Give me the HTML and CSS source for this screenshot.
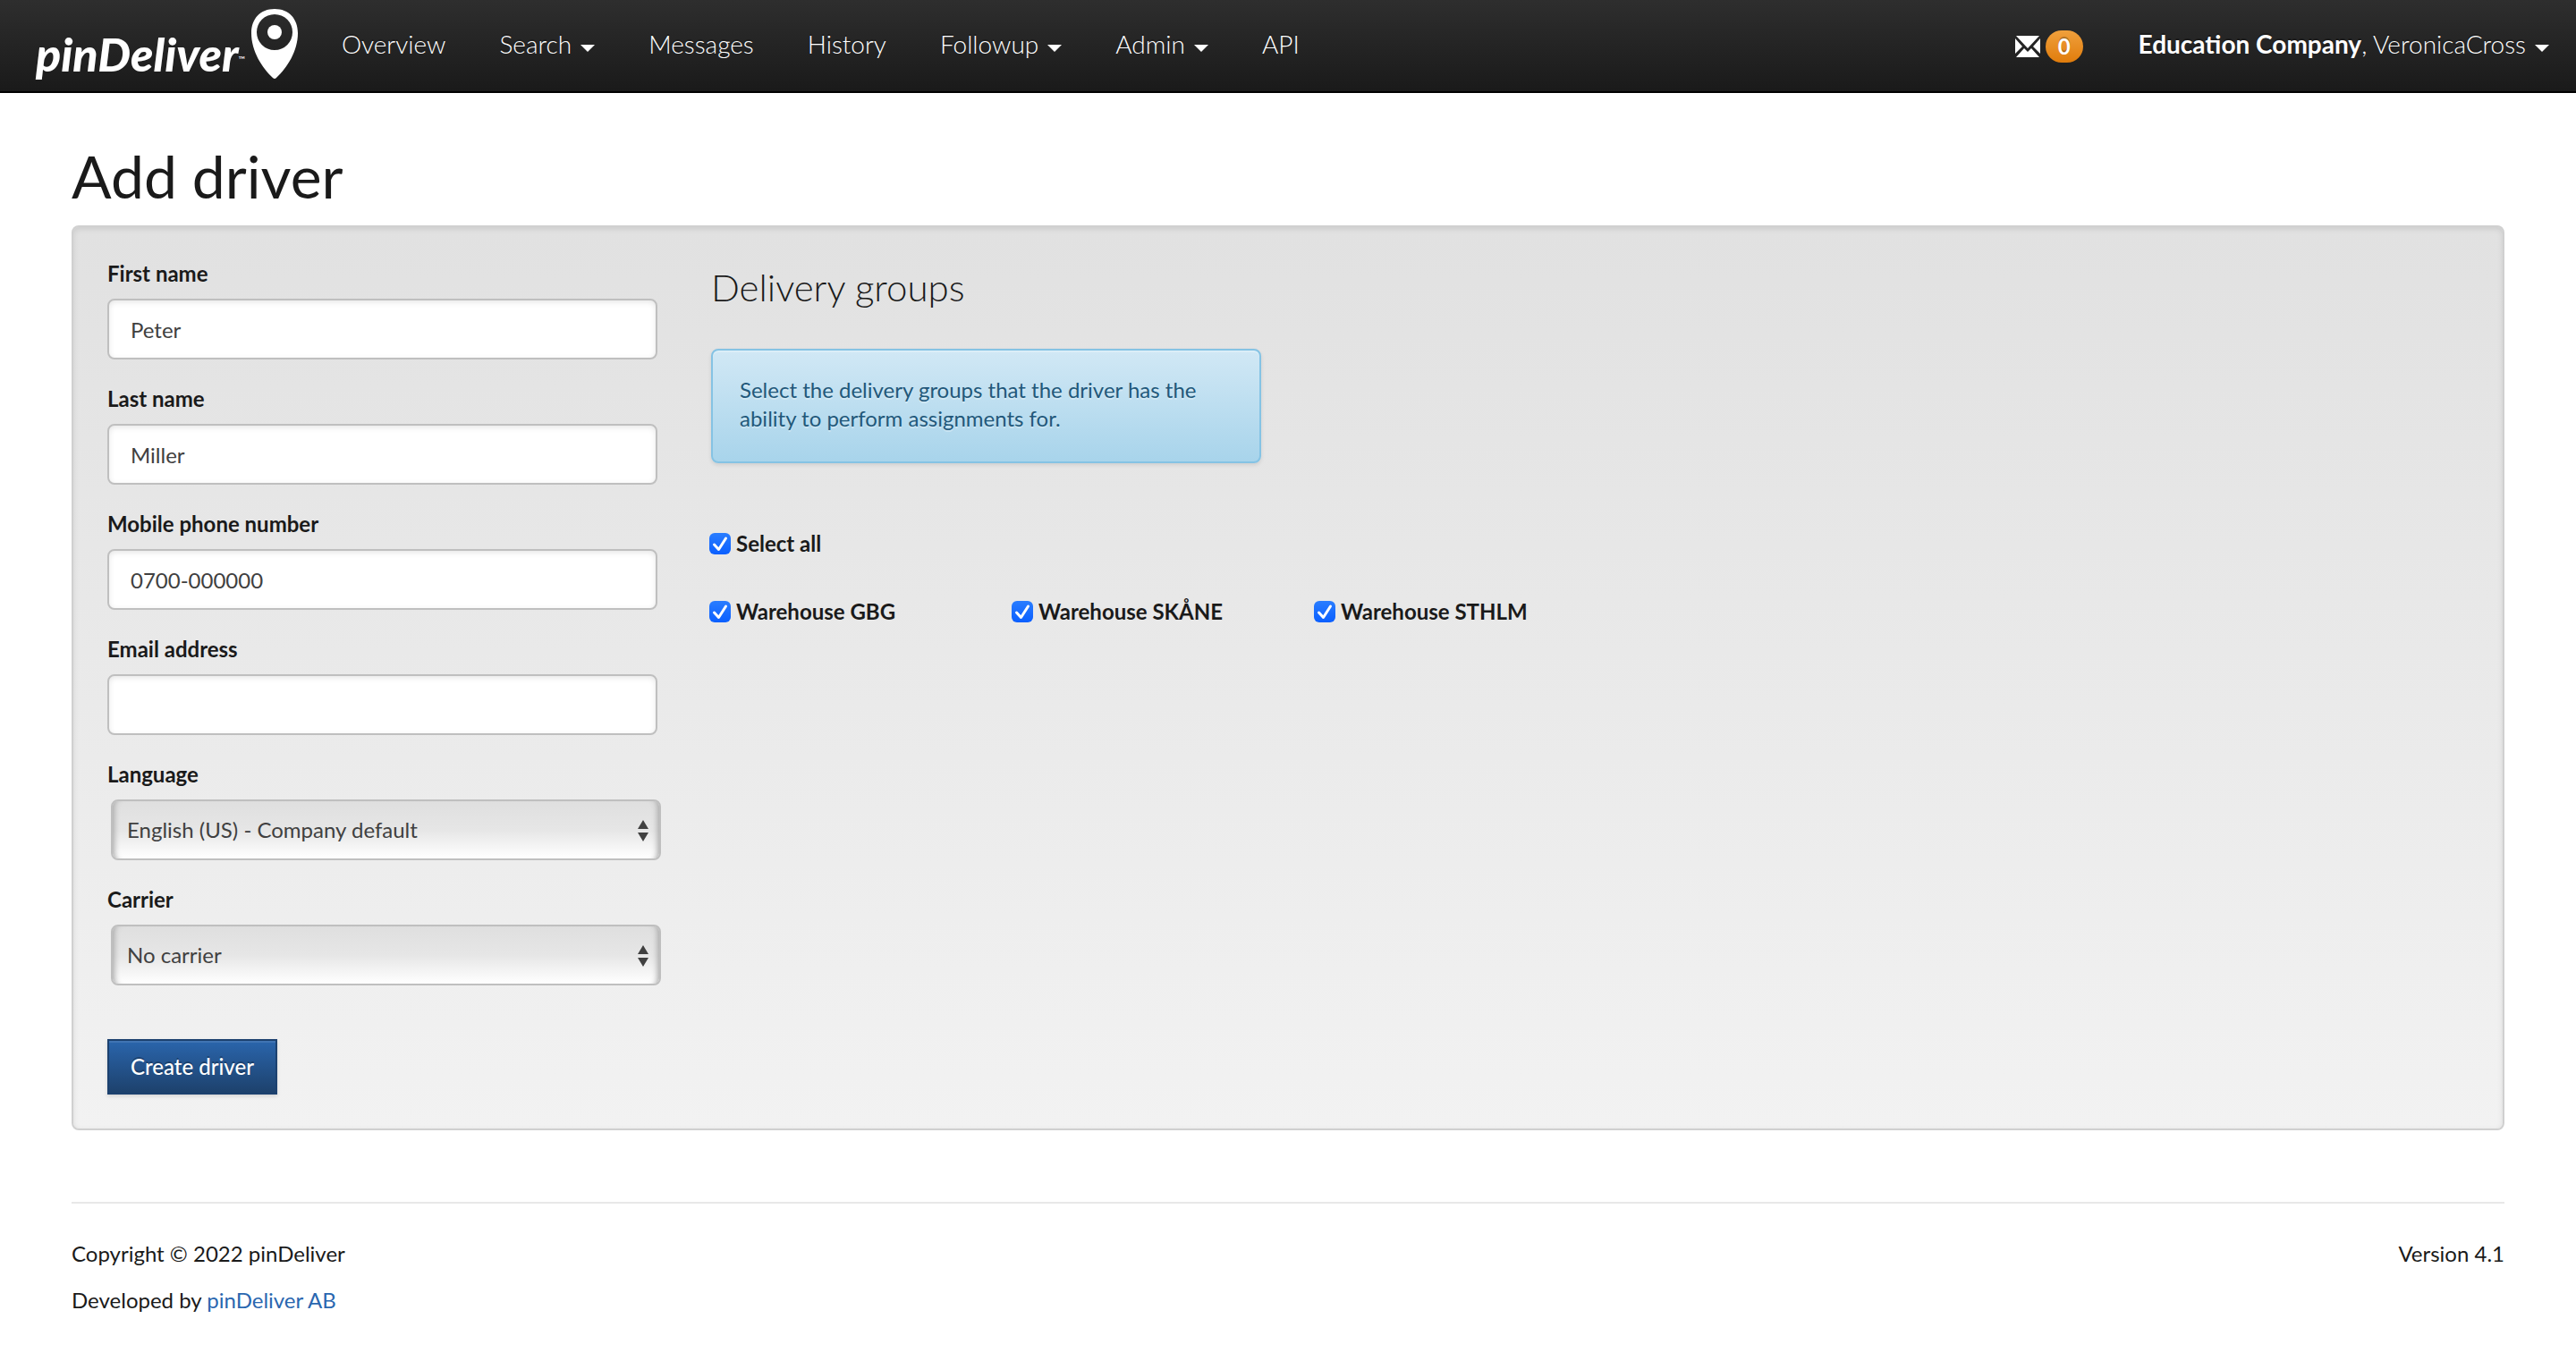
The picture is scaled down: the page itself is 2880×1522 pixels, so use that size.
FILE: index.html
```html
<!DOCTYPE html>
<html lang="en">
<head>
<meta charset="utf-8">
<title>Add driver - pinDeliver</title>
<link rel="stylesheet" href="styles.css">
</head>
<body>
<header class="navbar">
  <a class="brand" href="#" aria-label="pinDeliver">
    <span class="brand-name">pinDeliver</span><span class="brand-tm">™</span>
    <svg class="brand-pin" viewBox="0 0 52 78" aria-hidden="true">
      <path fill="#fff" fill-rule="evenodd" d="M26 0C10 0 0 11 0 27c0 20 12 39 24 50q2 2 4 0c12-11 24-30 24-50C52 11 42 0 26 0zm0 6a20 20 0 1 1 0 40 20 20 0 0 1 0-40z"/>
      <circle cx="26" cy="26" r="8" fill="#fff"/>
    </svg>
  </a>
  <nav class="menu">
    <a href="#">Overview</a>
    <a href="#">Search <span class="caret"></span></a>
    <a href="#">Messages</a>
    <a href="#">History</a>
    <a href="#">Followup <span class="caret"></span></a>
    <a href="#">Admin <span class="caret"></span></a>
    <a href="#">API</a>
  </nav>
  <div class="account">
    <a class="inbox" href="#" aria-label="Messages">
      <svg class="envelope" viewBox="0 0 28 24" aria-hidden="true">
        <path fill="#fff" d="M1 0h26L14 14zM0 3l8 9-8 8zM28 3v17l-8-8zM1 24l9-10 4 4 4-4 9 10z"/>
      </svg>
      <span class="badge">0</span>
    </a>
    <a class="user" href="#"><span><strong>Education Company</strong>, VeronicaCross</span> <span class="caret"></span></a>
  </div>
</header>

<main class="page">
  <h1>Add driver</h1>
  <form class="panel">
    <div class="fields">
      <div class="field"><label for="first">First name</label><input class="text" id="first" type="text" value="Peter"></div>
      <div class="field"><label for="last">Last name</label><input class="text" id="last" type="text" value="Miller"></div>
      <div class="field"><label for="phone">Mobile phone number</label><input class="text" id="phone" type="text" value="0700-000000"></div>
      <div class="field"><label for="email">Email address</label><input class="text" id="email" type="text"></div>
      <div class="field"><label for="language">Language</label>
        <div class="select"><select id="language"><option>English (US) - Company default</option></select>
        <svg class="arrows" viewBox="0 0 12 28" aria-hidden="true"><path fill="#404040" d="M6 3l6 10H0zM0 17h12L6 27z"/></svg></div></div>
      <div class="field"><label for="carrier">Carrier</label>
        <div class="select"><select id="carrier"><option>No carrier</option></select>
        <svg class="arrows" viewBox="0 0 12 28" aria-hidden="true"><path fill="#404040" d="M6 3l6 10H0zM0 17h12L6 27z"/></svg></div></div>
      <button class="submit" type="button">Create driver</button>
    </div>
    <section class="groups">
      <h2>Delivery groups</h2>
      <p class="alert">Select the delivery groups that the driver has the ability to perform assignments for.</p>
      <div class="checks">
        <label class="check all"><input type="checkbox" checked>Select all</label>
        <label class="check"><input type="checkbox" checked>Warehouse GBG</label>
        <label class="check"><input type="checkbox" checked>Warehouse SKÅNE</label>
        <label class="check"><input type="checkbox" checked>Warehouse STHLM</label>
      </div>
    </section>
  </form>

  <footer class="footer">
    <div>
      <p>Copyright © 2022 pinDeliver</p>
      <p>Developed by <a href="#">pinDeliver AB</a></p>
    </div>
    <p>Version 4.1</p>
  </footer>
</main>
</body>
</html>
```
FILE: styles.css
```css
* { box-sizing: border-box; }

body {
  margin: 0;
  background: #fff;
  color: #1a1a1a;
  font: 24px/32px Lato, sans-serif;
}

h1, h2, p { margin: 0; }

.navbar {
  display: flex;
  align-items: flex-start;
  height: 104px;
  padding: 0 30px 0 40px;
  background: linear-gradient(#2e2e2e, #1a1a1a);
  border-bottom: 2px solid #000;
  color: #fff;
}

.navbar a { color: #fff; text-decoration: none; }

.brand {
  display: flex;
  align-items: flex-start;
  width: 293px;
  padding-top: 10px;
}

.brand-name {
  padding-top: 24px;
  font-size: 52px;
  line-height: 52px;
  font-weight: 900;
  font-style: italic;
}

.brand-tm { padding-top: 50px; font-size: 10px; line-height: 12px; }
.brand-pin { width: 52px; height: 78px; margin-left: auto; }

.menu { display: flex; gap: 60px; margin-left: 49px; }

.menu a, .user {
  display: flex;
  align-items: center;
  gap: 10px;
  padding-top: 32px;
  font-size: 28px;
  line-height: 34px;
  font-weight: 300;
  text-shadow: 0 -2px 0 rgba(0, 0, 0, .25);
}

.user strong { font-weight: 700; }

.caret {
  width: 16px;
  margin-top: 10px;
  border: 8px solid transparent;
  border-top-color: #fff;
  border-bottom: 0;
}

.account { display: flex; align-items: flex-start; gap: 62px; margin-left: auto; }
.inbox { display: flex; align-items: center; gap: 6px; padding-top: 34px; }
.envelope { width: 28px; height: 24px; }

.badge {
  padding: 0 14px;
  border-radius: 18px;
  background: linear-gradient(#f0a03c, #e07c0c);
  font-size: 24px;
  line-height: 36px;
  font-weight: 700;
  text-shadow: 0 -2px 0 rgba(0, 0, 0, .25);
}

.page { padding: 54px 80px 0; }

h1 { font-size: 66px; line-height: 78px; font-weight: 400; }

.panel {
  display: flex;
  gap: 60px;
  margin-top: 16px;
  padding: 36px 38px 38px;
  border: 2px solid #d0d0d0;
  border-radius: 8px;
  background: linear-gradient(#e1e1e1, #f2f2f2);
  box-shadow: inset 0 2px 6px rgba(0, 0, 0, .1);
}

.fields { width: 615px; }
.field { margin-bottom: 28px; }
.field label { display: block; margin-bottom: 12px; line-height: 32px; font-weight: 700; }

.text, .select select {
  display: block;
  width: 100%;
  height: 68px;
  border: 2px solid #bfbfbf;
  border-radius: 8px;
  color: #404040;
  font: 24px/32px Lato, sans-serif;
}

.text {
  padding: 0 24px;
  background: #fff;
  box-shadow: inset 0 2px 6px rgba(0, 0, 0, .1);
}

.select { position: relative; margin: 0 -4px 0 4px; }

.select select {
  appearance: none;
  padding: 0 16px;
  background: linear-gradient(#dfdfdf, #e6e6e6 50%, #fff);
  box-shadow: inset 8px 0 6px -6px #aaa, inset -8px 0 6px -6px #aaa;
}

.arrows { position: absolute; right: 14px; top: 20px; width: 12px; height: 28px; }

.submit {
  height: 62px;
  margin-top: 32px;
  padding: 0 24px;
  border: 2px solid #1c416f;
  background: linear-gradient(#2a65ac, #1d416c);
  box-shadow: inset 0 2px 0 #4074b3, 0 2px 4px rgba(0, 0, 0, .12);
  color: #fff;
  font: 500 24px/32px Lato, sans-serif;
  text-shadow: 0 -2px 0 rgba(0, 0, 0, .25);
}

.groups h2 { margin-top: 6px; font-size: 42px; line-height: 50px; font-weight: 300; }

.alert {
  width: 615px;
  margin-top: 44px;
  padding: 28px 30px 32px;
  border: 2px solid #85c3e4;
  border-radius: 8px;
  background: linear-gradient(#d1e8f5, #a8d4eb);
  box-shadow: inset 0 2px 0 #dbeef8, 0 2px 4px rgba(0, 0, 0, .1);
  color: #22587a;
  text-shadow: 0 2px 0 rgba(255, 255, 255, .3);
}

.checks {
  display: grid;
  grid-template-columns: repeat(3, 338px);
  row-gap: 44px;
  margin-top: 74px;
}

.check { display: flex; align-items: center; gap: 6px; margin-left: -2px; font-weight: 700; }
.check.all { grid-column: 1 / -1; }

.check input {
  appearance: none;
  width: 24px;
  height: 24px;
  margin: 0;
  border-radius: 6px;
  background: linear-gradient(#2a7dff, #0a5fff);
}

.check input:checked {
  background:
    url("data:image/svg+xml,%3Csvg xmlns='http://www.w3.org/2000/svg' viewBox='0 0 24 24'%3E%3Cpath d='M5.500 13l5 5.500L18.500 6' fill='none' stroke='white' stroke-width='3' stroke-linecap='round' stroke-linejoin='round'/%3E%3C/svg%3E"),
    linear-gradient(#2a7dff, #0a5fff);
}

.footer {
  display: flex;
  justify-content: space-between;
  margin-top: 80px;
  padding-top: 40px;
  border-top: 2px solid #e8e8e8;
}

.footer p { margin-bottom: 20px; }
.footer a { color: #2a67b0; text-decoration: none; }
```
